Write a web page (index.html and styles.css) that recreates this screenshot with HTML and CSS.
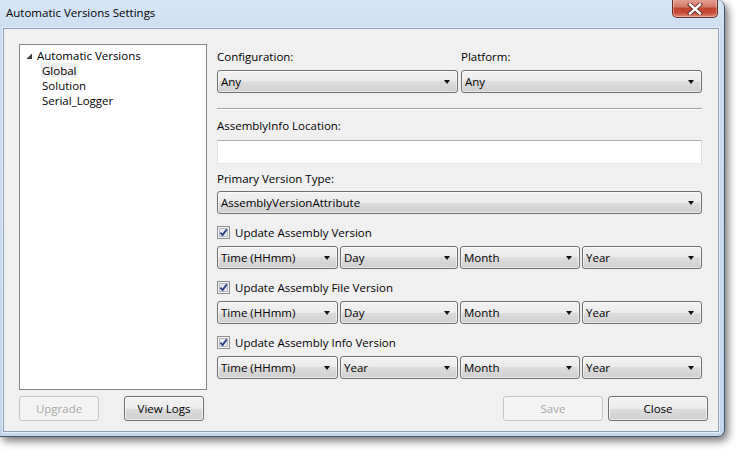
FILE: index.html
```html
<!DOCTYPE html>
<html>
<head>
<meta charset="utf-8">
<link rel="stylesheet" href="styles.css">
</head>
<body>
<div class="window">
  <div class="titlebar">
    <span class="title">Automatic Versions Settings</span>
    <div class="close-x">
      <svg width="18" height="12" viewBox="0 0 18 12"><path d="M4 1.5 L14 10.5 M14 1.5 L4 10.5" stroke="#5a2a24" stroke-width="4.2" stroke-linecap="square"/><path d="M4 1.5 L14 10.5 M14 1.5 L4 10.5" stroke="#ffffff" stroke-width="2.4" stroke-linecap="square"/></svg>
    </div>
  </div>
  <div class="client">
    <div class="main">
      <div class="tree">
        <div class="node root"><svg class="expander" width="7" height="7" viewBox="0 0 7 7"><polygon points="6,0.5 6,6 0.5,6" fill="#3c3c3c"/></svg>Automatic Versions</div>
        <div class="node child"><span class="hover">Global</span></div>
        <div class="node child">Solution</div>
        <div class="node child">Serial_Logger</div>
      </div>
      <div class="form">
        <div class="pair labels">
          <span class="label">Configuration:</span>
          <span class="label">Platform:</span>
        </div>
        <div class="pair">
          <div class="combo"><span>Any</span><i class="arrow"></i></div>
          <div class="combo"><span>Any</span><i class="arrow"></i></div>
        </div>
        <div class="sep"></div>
        <div class="label lbl-info">AssemblyInfo Location:</div>
        <div class="textbox"></div>
        <div class="label lbl-primary">Primary Version Type:</div>
        <div class="combo"><span>AssemblyVersionAttribute</span><i class="arrow"></i></div>

        <div class="check"><svg width="13" height="13" viewBox="0 0 13 13"><rect x="0.5" y="0.5" width="12" height="12" fill="#f4f4f4" stroke="#8e8f8f"/><rect x="2.5" y="2.5" width="8" height="8" fill="#e6e9ee" stroke="#b6bbc6"/><path d="M3.4 6.6 L5.6 9 L9.8 3.4" fill="none" stroke="#2d3f86" stroke-width="1.8"/></svg><span>Update Assembly Version</span></div>
        <div class="quad">
          <div class="combo"><span>Time (HHmm)</span><i class="arrow"></i></div>
          <div class="combo"><span>Day</span><i class="arrow"></i></div>
          <div class="combo"><span>Month</span><i class="arrow"></i></div>
          <div class="combo"><span>Year</span><i class="arrow"></i></div>
        </div>

        <div class="check"><svg width="13" height="13" viewBox="0 0 13 13"><rect x="0.5" y="0.5" width="12" height="12" fill="#f4f4f4" stroke="#8e8f8f"/><rect x="2.5" y="2.5" width="8" height="8" fill="#e6e9ee" stroke="#b6bbc6"/><path d="M3.4 6.6 L5.6 9 L9.8 3.4" fill="none" stroke="#2d3f86" stroke-width="1.8"/></svg><span>Update Assembly File Version</span></div>
        <div class="quad">
          <div class="combo"><span>Time (HHmm)</span><i class="arrow"></i></div>
          <div class="combo"><span>Day</span><i class="arrow"></i></div>
          <div class="combo"><span>Month</span><i class="arrow"></i></div>
          <div class="combo"><span>Year</span><i class="arrow"></i></div>
        </div>

        <div class="check"><svg width="13" height="13" viewBox="0 0 13 13"><rect x="0.5" y="0.5" width="12" height="12" fill="#f4f4f4" stroke="#8e8f8f"/><rect x="2.5" y="2.5" width="8" height="8" fill="#e6e9ee" stroke="#b6bbc6"/><path d="M3.4 6.6 L5.6 9 L9.8 3.4" fill="none" stroke="#2d3f86" stroke-width="1.8"/></svg><span>Update Assembly Info Version</span></div>
        <div class="quad">
          <div class="combo"><span>Time (HHmm)</span><i class="arrow"></i></div>
          <div class="combo"><span>Year</span><i class="arrow"></i></div>
          <div class="combo"><span>Month</span><i class="arrow"></i></div>
          <div class="combo"><span>Year</span><i class="arrow"></i></div>
        </div>
      </div>
    </div>
    <div class="footer">
      <div class="btn small disabled">Upgrade</div>
      <div class="btn small logs">View Logs</div>
      <div class="btn wide disabled save">Save</div>
      <div class="btn wide close">Close</div>
    </div>
  </div>
</div>
</body>
</html>
```

FILE: styles.css
```css
* { box-sizing: border-box; }
html, body { margin: 0; padding: 0; background: #ffffff; }
body {
  width: 737px;
  height: 454px;
  overflow: hidden;
  font-family: "Open Sans", "Noto Sans", sans-serif;
  font-size: 11.5px;
  color: #000;
}
.window {
  width: 725px;
  height: 437px;
  background: linear-gradient(to bottom, #d6e6f6 0px, #cadcf0 40px, #c2d7ee 100%);
  border-right: 1px solid #45556a;
  border-bottom: 1px solid #45556a;
  border-radius: 0 7px 7px 0;
  box-shadow: 3px 4px 9px rgba(0,0,0,0.55);
  display: flex;
  flex-direction: column;
}
.titlebar {
  height: 28px;
  display: flex;
  align-items: flex-start;
  padding-left: 6px;
  padding-right: 6px;
}
.title {
  margin-top: 5px;
  font-size: 11.5px;
  color: #000;
}
.close-x {
  margin-left: auto;
  width: 46px;
  height: 19px;
  margin-top: -1px;
  border: 1px solid #6b2c25;
  border-top: none;
  border-radius: 0 0 5px 5px;
  background: linear-gradient(to bottom, #e6a597 0%, #d47766 45%, #c1442f 50%, #c64a36 75%, #dc8a72 100%);
  box-shadow: inset 0 0 0 1px rgba(255,255,255,0.35);
  display: flex;
  align-items: center;
  justify-content: center;
  padding-top: 1px;
}
.client {
  margin-left: 3px;
  width: 716px;
  height: 404px;
  background: #f0f0f0;
  border: 1px solid #8ca0b8;
  box-shadow: 0 0 0 1px #e5eef8;
  padding: 15px 10px 10px 15px;
  display: flex;
  flex-direction: column;
}
.main {
  display: flex;
  height: 346px;
}
.tree {
  width: 188px;
  height: 346px;
  background: #fff;
  border: 1px solid #828790;
  padding-top: 3px;
}
.node {
  height: 15px;
  line-height: 15px;
  white-space: nowrap;
}
.root {
  padding-left: 6px;
  display: flex;
  align-items: center;
}
.expander { margin-right: 4px; margin-top: 1px; }
.child { padding-left: 22px; }
.hover { background: #f0f0f0; padding: 0 1px; margin-left: -1px; }
.form {
  margin-left: 10px;
  width: 485px;
  display: flex;
  flex-direction: column;
  padding-top: 5px;
}
.label {
  display: block;
  height: 16px;
  line-height: 16px;
  white-space: nowrap;
}
.pair {
  display: grid;
  grid-template-columns: 1fr 1fr;
  column-gap: 3px;
}
.labels { margin-bottom: 5px; }
.combo {
  height: 23px;
  border: 1px solid #707070;
  border-radius: 3px;
  background: linear-gradient(to bottom, #f2f2f2 0%, #ebebeb 50%, #dddddd 50%, #cfcfcf 100%);
  box-shadow: inset 0 0 0 1px rgba(255,255,255,0.55);
  display: flex;
  align-items: center;
  padding-left: 3px;
  padding-right: 7px;
  white-space: nowrap;
}
.combo span { flex: 1; line-height: 16px; }
.arrow {
  width: 0;
  height: 0;
  border-left: 3.5px solid transparent;
  border-right: 3.5px solid transparent;
  border-top: 4px solid #111;
}
.sep {
  margin-top: 15px;
  height: 1px;
  background: #a0a0a0;
  box-shadow: 0 1px 0 #ffffff;
}
.lbl-info { margin-top: 9px; }
.textbox {
  margin-top: 6px;
  height: 24px;
  background: #fff;
  border: 1px solid;
  border-color: #abadb3 #dbdfe6 #e3e9ef #e2e3ea;
}
.lbl-primary { margin-top: 7px; margin-bottom: 4px; }
.check {
  margin-top: 10px;
  height: 16px;
  display: flex;
  align-items: center;
  white-space: nowrap;
}
.check svg { margin-right: 5px; }
.quad {
  margin-top: 6px;
  display: grid;
  grid-template-columns: 121px 118px 120px 1fr;
  column-gap: 2px;
}
.quad .combo { padding-right: 7px; }
.footer {
  margin-top: 6px;
  display: flex;
  align-items: center;
}
.btn {
  height: 25px;
  border: 1px solid #707070;
  border-radius: 3px;
  background: linear-gradient(to bottom, #f2f2f2 0%, #ebebeb 50%, #dddddd 50%, #cfcfcf 100%);
  box-shadow: inset 0 0 0 1px rgba(255,255,255,0.6);
  display: flex;
  align-items: center;
  justify-content: center;
  line-height: 16px;
}
.btn.small { width: 80px; }
.btn.wide { width: 100px; }
.logs { margin-left: 25px; }
.save { margin-left: auto; }
.close { margin-left: 5px; }
.btn.disabled {
  border-color: #c3c5c8;
  background: #f4f4f4;
  box-shadow: none;
  color: #a6a6a6;
}
```
